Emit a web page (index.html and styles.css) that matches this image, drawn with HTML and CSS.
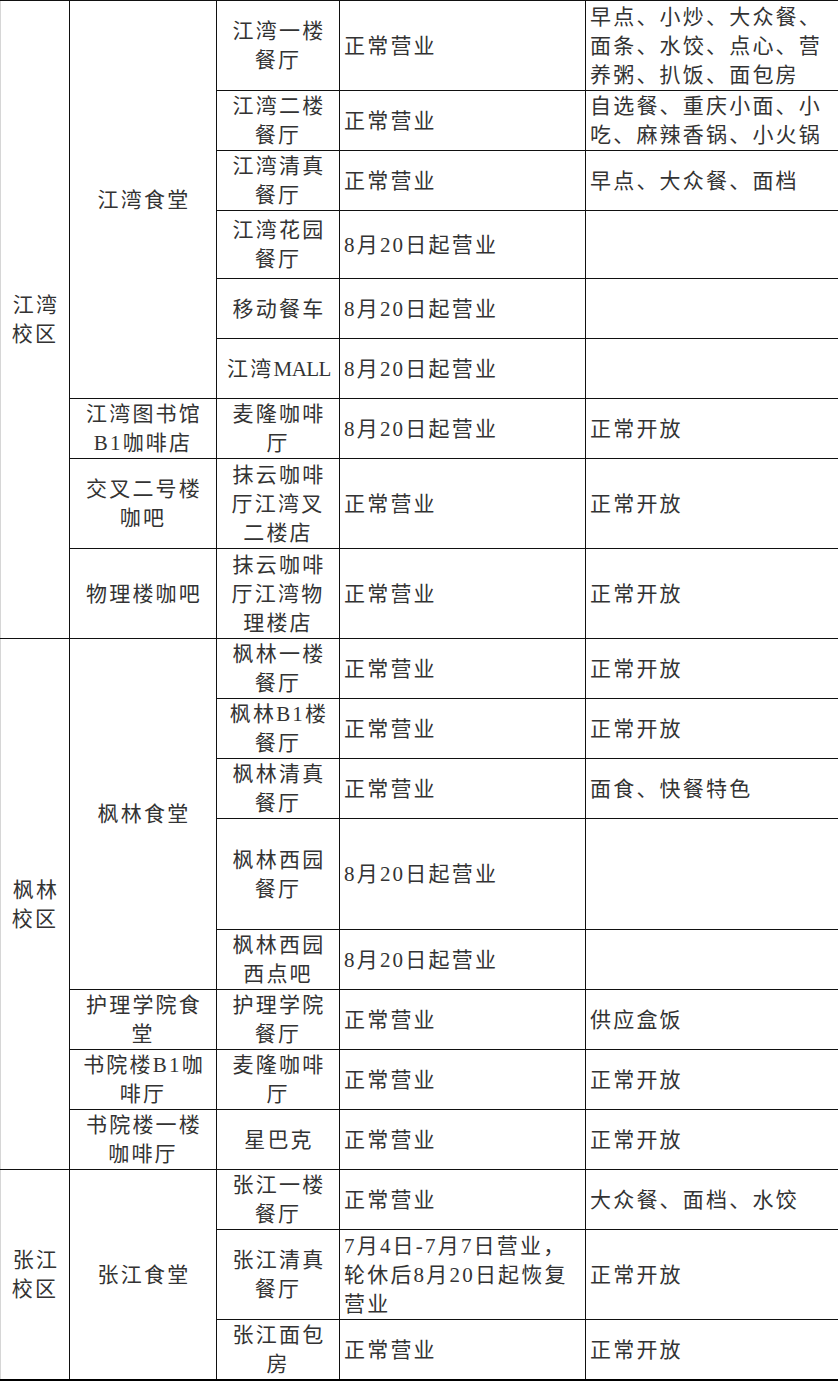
FILE: index.html
```html
<!DOCTYPE html>
<html lang="zh-CN">
<head>
<meta charset="utf-8">
<title>食堂营业安排</title>
<link rel="stylesheet" href="styles.css">
</head>
<body>
<table class="sched">
  <colgroup>
    <col class="c-campus">
    <col class="c-canteen">
    <col class="c-hall">
    <col class="c-status">
    <col class="c-note">
  </colgroup>
  <tbody>
    <tr class="h90">
      <td class="campus first-col" rowspan="9">江湾<br>校区</td>
      <td class="canteen" rowspan="6">江湾食堂</td>
      <td class="hall">江湾一楼<br>餐厅</td>
      <td class="status">正常营业</td>
      <td class="note">早点、小炒、大众餐、<br>面条、水饺、点心、营<br>养粥、扒饭、面包房</td>
    </tr>
    <tr class="h60">
      <td class="hall">江湾二楼<br>餐厅</td>
      <td class="status">正常营业</td>
      <td class="note">自选餐、重庆小面、小<br>吃、麻辣香锅、小火锅</td>
    </tr>
    <tr class="h60">
      <td class="hall">江湾清真<br>餐厅</td>
      <td class="status">正常营业</td>
      <td class="note">早点、大众餐、面档</td>
    </tr>
    <tr class="h68">
      <td class="hall">江湾花园<br>餐厅</td>
      <td class="status">8月20日起营业</td>
      <td class="note"></td>
    </tr>
    <tr class="h60">
      <td class="hall">移动餐车</td>
      <td class="status">8月20日起营业</td>
      <td class="note"></td>
    </tr>
    <tr class="h60">
      <td class="hall">江湾<span class="narrow">MALL</span></td>
      <td class="status">8月20日起营业</td>
      <td class="note"></td>
    </tr>
    <tr class="h60">
      <td class="canteen">江湾图书馆<br>B1咖啡店</td>
      <td class="hall">麦隆咖啡<br>厅</td>
      <td class="status">8月20日起营业</td>
      <td class="note">正常开放</td>
    </tr>
    <tr class="h90">
      <td class="canteen">交叉二号楼<br>咖吧</td>
      <td class="hall">抹云咖啡<br>厅江湾叉<br>二楼店</td>
      <td class="status">正常营业</td>
      <td class="note">正常开放</td>
    </tr>
    <tr class="h90">
      <td class="canteen">物理楼咖吧</td>
      <td class="hall">抹云咖啡<br>厅江湾物<br>理楼店</td>
      <td class="status">正常营业</td>
      <td class="note">正常开放</td>
    </tr>

    <tr class="h60">
      <td class="campus first-col" rowspan="8">枫林<br>校区</td>
      <td class="canteen" rowspan="5">枫林食堂</td>
      <td class="hall">枫林一楼<br>餐厅</td>
      <td class="status">正常营业</td>
      <td class="note">正常开放</td>
    </tr>
    <tr class="h60">
      <td class="hall">枫林B1楼<br>餐厅</td>
      <td class="status">正常营业</td>
      <td class="note">正常开放</td>
    </tr>
    <tr class="h60">
      <td class="hall">枫林清真<br>餐厅</td>
      <td class="status">正常营业</td>
      <td class="note">面食、快餐特色</td>
    </tr>
    <tr class="h111">
      <td class="hall">枫林西园<br>餐厅</td>
      <td class="status">8月20日起营业</td>
      <td class="note"></td>
    </tr>
    <tr class="h60">
      <td class="hall">枫林西园<br>西点吧</td>
      <td class="status">8月20日起营业</td>
      <td class="note"></td>
    </tr>
    <tr class="h60">
      <td class="canteen">护理学院食<br>堂</td>
      <td class="hall">护理学院<br>餐厅</td>
      <td class="status">正常营业</td>
      <td class="note">供应盒饭</td>
    </tr>
    <tr class="h60">
      <td class="canteen">书院楼B1咖<br>啡厅</td>
      <td class="hall">麦隆咖啡<br>厅</td>
      <td class="status">正常营业</td>
      <td class="note">正常开放</td>
    </tr>
    <tr class="h60">
      <td class="canteen">书院楼一楼<br>咖啡厅</td>
      <td class="hall">星巴克</td>
      <td class="status">正常营业</td>
      <td class="note">正常开放</td>
    </tr>

    <tr class="h60">
      <td class="campus first-col" rowspan="3">张江<br>校区</td>
      <td class="canteen" rowspan="3">张江食堂</td>
      <td class="hall">张江一楼<br>餐厅</td>
      <td class="status">正常营业</td>
      <td class="note">大众餐、面档、水饺</td>
    </tr>
    <tr class="h90">
      <td class="hall">张江清真<br>餐厅</td>
      <td class="status">7月4日-7月7日营业，<br>轮休后8月20日起恢复<br>营业</td>
      <td class="note">正常开放</td>
    </tr>
    <tr class="h60">
      <td class="hall">张江面包<br>房</td>
      <td class="status">正常营业</td>
      <td class="note">正常开放</td>
    </tr>
  </tbody>
</table>
</body>
</html>
```

FILE: styles.css
```css
html, body {
  margin: 0;
  padding: 0;
  background: #ffffff;
}

.sched {
  border-collapse: collapse;
  table-layout: fixed;
  width: 838px;
  font-family: "Liberation Serif", "Noto Sans CJK SC", serif;
  font-size: 21px;
  line-height: 29px;
  letter-spacing: 2.2px;
  color: #333333;
  border-top: 1px solid #d6d6d6;
  border-bottom: 2px solid #000;
}

.c-campus { width: 69px; }
.c-canteen { width: 147px; }
.c-hall { width: 123px; }
.c-status { width: 246px; }
.c-note { width: 253px; }

.sched td {
  border: 1px solid #111;
  padding: 1px 4px 0;
  vertical-align: middle;
  white-space: nowrap;
  overflow: hidden;
}

.sched td.first-col {
  border-left: 1px solid #d6d6d6;
}

.campus,
.canteen,
.hall {
  text-align: center;
  text-indent: 2px;
}

.status,
.note {
  text-align: left;
}

.narrow {
  letter-spacing: -0.5px;
}

/* row heights from the source document */
.h60 { height: 60px; }
.h68 { height: 68px; }
.h90 { height: 90px; }
.h111 { height: 111px; }
```
